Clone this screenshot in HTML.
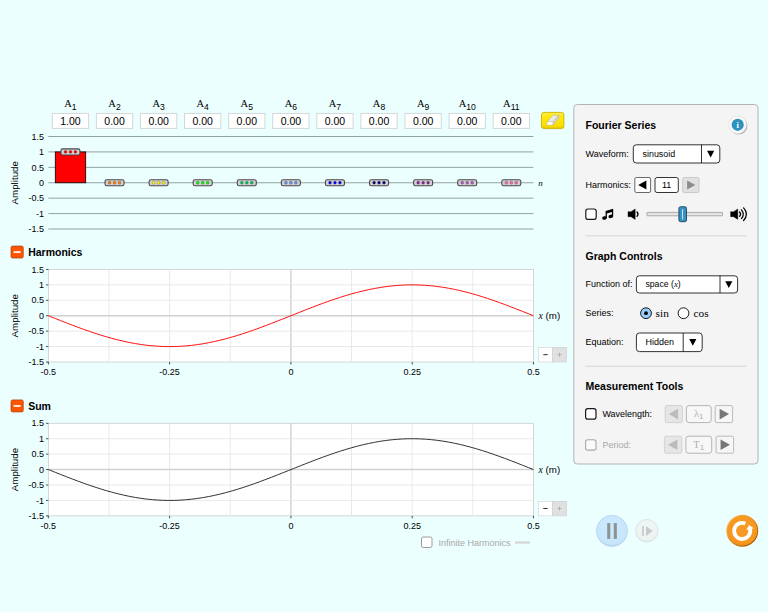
<!DOCTYPE html>
<html lang="en"><head><meta charset="utf-8"><title>Fourier: Making Waves</title>
<style>
html,body{margin:0;padding:0;background:rgb(236,255,255);overflow:hidden}
svg{display:block;position:absolute;left:0;top:0}
text{font-family:"Liberation Sans",Arial,sans-serif}
.s{font-family:"Liberation Serif","Times New Roman",serif}
.t9{font-size:9px}
.tk{font-size:9px}
.b{font-weight:bold;font-size:10.5px}
</style></head><body>
<svg width="768" height="612" viewBox="0 0 768 612">
<defs>
<linearGradient id="shG" x1="0" y1="0" x2="1" y2="1"><stop offset="0.4" stop-color="#e8e8e8"/><stop offset="1" stop-color="#8c8c8c"/></linearGradient>
<linearGradient id="resetS" x1="0.15" y1="0.15" x2="0.85" y2="0.85"><stop offset="0" stop-color="#f9b257"/><stop offset="0.5" stop-color="#e08a1c"/><stop offset="1" stop-color="#a85e08"/></linearGradient>
<linearGradient id="yel" x1="0" y1="0" x2="0" y2="1"><stop offset="0" stop-color="#fff04a"/><stop offset="0.25" stop-color="#ffe812"/><stop offset="0.8" stop-color="#fbe000"/><stop offset="1" stop-color="#e2c800"/></linearGradient>
<linearGradient id="thumb" x1="0" y1="0" x2="0" y2="1"><stop offset="0" stop-color="#7fc4ea"/><stop offset="0.5" stop-color="#3d9bd1"/><stop offset="1" stop-color="#2f7fb0"/></linearGradient>
<radialGradient id="pauseG" cx="0.5" cy="0.4" r="0.6"><stop offset="0" stop-color="#cdeaff"/><stop offset="0.85" stop-color="#c6e6fd"/><stop offset="1" stop-color="#b4d6ef"/></radialGradient>
<radialGradient id="stepG" cx="0.5" cy="0.4" r="0.6"><stop offset="0" stop-color="#f2f7f7"/><stop offset="0.85" stop-color="#ecf2f2"/><stop offset="1" stop-color="#dde5e5"/></radialGradient>
<radialGradient id="resetG" cx="0.5" cy="0.4" r="0.6"><stop offset="0" stop-color="#f89b26"/><stop offset="0.85" stop-color="#f6961e"/><stop offset="1" stop-color="#e48818"/></radialGradient>
<radialGradient id="infoG" cx="0.5" cy="0.4" r="0.6"><stop offset="0" stop-color="#ffffff"/><stop offset="1" stop-color="#e4e4e4"/></radialGradient>
</defs>
<rect width="768" height="612" fill="rgb(236,255,255)"/>

<line x1="48.35" y1="136.50" x2="533.45" y2="136.50" stroke="#93a0a0" stroke-width="1"/>
<text class="tk" x="44.1" y="139.70" text-anchor="end">1.5</text>
<line x1="48.35" y1="151.92" x2="533.45" y2="151.92" stroke="#93a0a0" stroke-width="1"/>
<text class="tk" x="44.1" y="155.12" text-anchor="end">1</text>
<line x1="48.35" y1="167.34" x2="533.45" y2="167.34" stroke="#93a0a0" stroke-width="1"/>
<text class="tk" x="44.1" y="170.54" text-anchor="end">0.5</text>
<line x1="48.35" y1="182.76" x2="533.45" y2="182.76" stroke="#93a0a0" stroke-width="1"/>
<text class="tk" x="44.1" y="185.96" text-anchor="end">0</text>
<line x1="48.35" y1="198.18" x2="533.45" y2="198.18" stroke="#93a0a0" stroke-width="1"/>
<text class="tk" x="44.1" y="201.38" text-anchor="end">-0.5</text>
<line x1="48.35" y1="213.60" x2="533.45" y2="213.60" stroke="#93a0a0" stroke-width="1"/>
<text class="tk" x="44.1" y="216.80" text-anchor="end">-1</text>
<line x1="48.35" y1="229.02" x2="533.45" y2="229.02" stroke="#93a0a0" stroke-width="1"/>
<text class="tk" x="44.1" y="232.22" text-anchor="end">-1.5</text>
<text x="0" y="0" font-size="9.75" text-anchor="middle" transform="translate(18.4,182.76) rotate(-90)">Amplitude</text>
<text class="s" x="538.3" y="186.16" font-size="9" font-style="italic">n</text>
<text class="s" x="70.45" y="107.3" font-size="10.5" text-anchor="middle">A<tspan font-family="Liberation Sans" font-size="8.6" dy="2.7">1</tspan></text>
<rect x="52.30" y="113.4" width="36.3" height="15" fill="#fff" stroke="#d2d8d8" stroke-width="1"/>
<text x="70.45" y="124.5" font-size="10.5" text-anchor="middle">1.00</text>
<rect x="55.3" y="151.92" width="30.4" height="30.84" fill="rgb(255,0,0)" stroke="#000" stroke-width="0.8"/>
<rect x="60.95" y="148.87" width="19" height="6.1" rx="1.8" fill="#d2d2d2" stroke="#484848" stroke-width="1.1"/>
<circle cx="65.50" cy="151.92" r="1.45" fill="rgb(255,0,0)" stroke="#333" stroke-width="0.3"/>
<circle cx="70.45" cy="151.92" r="1.45" fill="rgb(255,0,0)" stroke="#333" stroke-width="0.3"/>
<circle cx="75.40" cy="151.92" r="1.45" fill="rgb(255,0,0)" stroke="#333" stroke-width="0.3"/>
<text class="s" x="114.53" y="107.3" font-size="10.5" text-anchor="middle">A<tspan font-family="Liberation Sans" font-size="8.6" dy="2.7">2</tspan></text>
<rect x="96.38" y="113.4" width="36.3" height="15" fill="#fff" stroke="#d2d8d8" stroke-width="1"/>
<text x="114.53" y="124.5" font-size="10.5" text-anchor="middle">0.00</text>
<rect x="105.03" y="179.71" width="19" height="6.1" rx="1.8" fill="#d2d2d2" stroke="#484848" stroke-width="1.1"/>
<circle cx="109.58" cy="182.76" r="1.45" fill="rgb(255,128,0)" stroke="#333" stroke-width="0.3"/>
<circle cx="114.53" cy="182.76" r="1.45" fill="rgb(255,128,0)" stroke="#333" stroke-width="0.3"/>
<circle cx="119.48" cy="182.76" r="1.45" fill="rgb(255,128,0)" stroke="#333" stroke-width="0.3"/>
<text class="s" x="158.62" y="107.3" font-size="10.5" text-anchor="middle">A<tspan font-family="Liberation Sans" font-size="8.6" dy="2.7">3</tspan></text>
<rect x="140.47" y="113.4" width="36.3" height="15" fill="#fff" stroke="#d2d8d8" stroke-width="1"/>
<text x="158.62" y="124.5" font-size="10.5" text-anchor="middle">0.00</text>
<rect x="149.12" y="179.71" width="19" height="6.1" rx="1.8" fill="#d2d2d2" stroke="#484848" stroke-width="1.1"/>
<circle cx="153.67" cy="182.76" r="1.45" fill="rgb(255,255,0)" stroke="#333" stroke-width="0.3"/>
<circle cx="158.62" cy="182.76" r="1.45" fill="rgb(255,255,0)" stroke="#333" stroke-width="0.3"/>
<circle cx="163.57" cy="182.76" r="1.45" fill="rgb(255,255,0)" stroke="#333" stroke-width="0.3"/>
<text class="s" x="202.70" y="107.3" font-size="10.5" text-anchor="middle">A<tspan font-family="Liberation Sans" font-size="8.6" dy="2.7">4</tspan></text>
<rect x="184.55" y="113.4" width="36.3" height="15" fill="#fff" stroke="#d2d8d8" stroke-width="1"/>
<text x="202.70" y="124.5" font-size="10.5" text-anchor="middle">0.00</text>
<rect x="193.20" y="179.71" width="19" height="6.1" rx="1.8" fill="#d2d2d2" stroke="#484848" stroke-width="1.1"/>
<circle cx="197.75" cy="182.76" r="1.45" fill="rgb(0,255,0)" stroke="#333" stroke-width="0.3"/>
<circle cx="202.70" cy="182.76" r="1.45" fill="rgb(0,255,0)" stroke="#333" stroke-width="0.3"/>
<circle cx="207.65" cy="182.76" r="1.45" fill="rgb(0,255,0)" stroke="#333" stroke-width="0.3"/>
<text class="s" x="246.79" y="107.3" font-size="10.5" text-anchor="middle">A<tspan font-family="Liberation Sans" font-size="8.6" dy="2.7">5</tspan></text>
<rect x="228.64" y="113.4" width="36.3" height="15" fill="#fff" stroke="#d2d8d8" stroke-width="1"/>
<text x="246.79" y="124.5" font-size="10.5" text-anchor="middle">0.00</text>
<rect x="237.29" y="179.71" width="19" height="6.1" rx="1.8" fill="#d2d2d2" stroke="#484848" stroke-width="1.1"/>
<circle cx="241.84" cy="182.76" r="1.45" fill="rgb(0,201,87)" stroke="#333" stroke-width="0.3"/>
<circle cx="246.79" cy="182.76" r="1.45" fill="rgb(0,201,87)" stroke="#333" stroke-width="0.3"/>
<circle cx="251.74" cy="182.76" r="1.45" fill="rgb(0,201,87)" stroke="#333" stroke-width="0.3"/>
<text class="s" x="290.88" y="107.3" font-size="10.5" text-anchor="middle">A<tspan font-family="Liberation Sans" font-size="8.6" dy="2.7">6</tspan></text>
<rect x="272.73" y="113.4" width="36.3" height="15" fill="#fff" stroke="#d2d8d8" stroke-width="1"/>
<text x="290.88" y="124.5" font-size="10.5" text-anchor="middle">0.00</text>
<rect x="281.38" y="179.71" width="19" height="6.1" rx="1.8" fill="#d2d2d2" stroke="#484848" stroke-width="1.1"/>
<circle cx="285.93" cy="182.76" r="1.45" fill="rgb(100,149,237)" stroke="#333" stroke-width="0.3"/>
<circle cx="290.88" cy="182.76" r="1.45" fill="rgb(100,149,237)" stroke="#333" stroke-width="0.3"/>
<circle cx="295.82" cy="182.76" r="1.45" fill="rgb(100,149,237)" stroke="#333" stroke-width="0.3"/>
<text class="s" x="334.96" y="107.3" font-size="10.5" text-anchor="middle">A<tspan font-family="Liberation Sans" font-size="8.6" dy="2.7">7</tspan></text>
<rect x="316.81" y="113.4" width="36.3" height="15" fill="#fff" stroke="#d2d8d8" stroke-width="1"/>
<text x="334.96" y="124.5" font-size="10.5" text-anchor="middle">0.00</text>
<rect x="325.46" y="179.71" width="19" height="6.1" rx="1.8" fill="#d2d2d2" stroke="#484848" stroke-width="1.1"/>
<circle cx="330.01" cy="182.76" r="1.45" fill="rgb(0,0,255)" stroke="#333" stroke-width="0.3"/>
<circle cx="334.96" cy="182.76" r="1.45" fill="rgb(0,0,255)" stroke="#333" stroke-width="0.3"/>
<circle cx="339.91" cy="182.76" r="1.45" fill="rgb(0,0,255)" stroke="#333" stroke-width="0.3"/>
<text class="s" x="379.05" y="107.3" font-size="10.5" text-anchor="middle">A<tspan font-family="Liberation Sans" font-size="8.6" dy="2.7">8</tspan></text>
<rect x="360.90" y="113.4" width="36.3" height="15" fill="#fff" stroke="#d2d8d8" stroke-width="1"/>
<text x="379.05" y="124.5" font-size="10.5" text-anchor="middle">0.00</text>
<rect x="369.55" y="179.71" width="19" height="6.1" rx="1.8" fill="#d2d2d2" stroke="#484848" stroke-width="1.1"/>
<circle cx="374.10" cy="182.76" r="1.45" fill="rgb(0,0,128)" stroke="#333" stroke-width="0.3"/>
<circle cx="379.05" cy="182.76" r="1.45" fill="rgb(0,0,128)" stroke="#333" stroke-width="0.3"/>
<circle cx="384.00" cy="182.76" r="1.45" fill="rgb(0,0,128)" stroke="#333" stroke-width="0.3"/>
<text class="s" x="423.13" y="107.3" font-size="10.5" text-anchor="middle">A<tspan font-family="Liberation Sans" font-size="8.6" dy="2.7">9</tspan></text>
<rect x="404.98" y="113.4" width="36.3" height="15" fill="#fff" stroke="#d2d8d8" stroke-width="1"/>
<text x="423.13" y="124.5" font-size="10.5" text-anchor="middle">0.00</text>
<rect x="413.63" y="179.71" width="19" height="6.1" rx="1.8" fill="#d2d2d2" stroke="#484848" stroke-width="1.1"/>
<circle cx="418.18" cy="182.76" r="1.45" fill="rgb(145,33,158)" stroke="#333" stroke-width="0.3"/>
<circle cx="423.13" cy="182.76" r="1.45" fill="rgb(145,33,158)" stroke="#333" stroke-width="0.3"/>
<circle cx="428.08" cy="182.76" r="1.45" fill="rgb(145,33,158)" stroke="#333" stroke-width="0.3"/>
<text class="s" x="467.21" y="107.3" font-size="10.5" text-anchor="middle">A<tspan font-family="Liberation Sans" font-size="8.6" dy="2.7">10</tspan></text>
<rect x="449.06" y="113.4" width="36.3" height="15" fill="#fff" stroke="#d2d8d8" stroke-width="1"/>
<text x="467.21" y="124.5" font-size="10.5" text-anchor="middle">0.00</text>
<rect x="457.71" y="179.71" width="19" height="6.1" rx="1.8" fill="#d2d2d2" stroke="#484848" stroke-width="1.1"/>
<circle cx="462.26" cy="182.76" r="1.45" fill="rgb(186,85,211)" stroke="#333" stroke-width="0.3"/>
<circle cx="467.21" cy="182.76" r="1.45" fill="rgb(186,85,211)" stroke="#333" stroke-width="0.3"/>
<circle cx="472.16" cy="182.76" r="1.45" fill="rgb(186,85,211)" stroke="#333" stroke-width="0.3"/>
<text class="s" x="511.30" y="107.3" font-size="10.5" text-anchor="middle">A<tspan font-family="Liberation Sans" font-size="8.6" dy="2.7">11</tspan></text>
<rect x="493.15" y="113.4" width="36.3" height="15" fill="#fff" stroke="#d2d8d8" stroke-width="1"/>
<text x="511.30" y="124.5" font-size="10.5" text-anchor="middle">0.00</text>
<rect x="501.80" y="179.71" width="19" height="6.1" rx="1.8" fill="#d2d2d2" stroke="#484848" stroke-width="1.1"/>
<circle cx="506.35" cy="182.76" r="1.45" fill="rgb(255,105,180)" stroke="#333" stroke-width="0.3"/>
<circle cx="511.30" cy="182.76" r="1.45" fill="rgb(255,105,180)" stroke="#333" stroke-width="0.3"/>
<circle cx="516.25" cy="182.76" r="1.45" fill="rgb(255,105,180)" stroke="#333" stroke-width="0.3"/>
<rect x="541.5" y="112.4" width="22.4" height="16.2" rx="2.4" fill="url(#yel)" stroke="#c9b100" stroke-width="0.9"/>
<g stroke="#9a9a9a" stroke-width="0.35" stroke-linejoin="round"><path d="M552.8 115.4 L558.9 115.3 L553.4 121.6 L547.3 121.8 Z" fill="#ececec"/><path d="M547.3 121.8 L553.4 121.6 L553 125 L546.7 125.2 Z" fill="#fff"/><path d="M553.4 121.6 L558.9 115.3 L558.7 118.3 L553 125 Z" fill="#d8d8d8"/></g>
<rect x="11" y="246.05" width="12.25" height="12" rx="1.5" fill="rgb(255,85,0)" stroke="#a8400a" stroke-width="0.7"/>
<rect x="13.6" y="251.25" width="7" height="1.7" fill="#fff"/>
<text class="b" x="28.2" y="256.05">Harmonics</text>
<rect x="48.35" y="269.45" width="485.1" height="92.55" fill="#fff" stroke="#c8cccc" stroke-width="0.8"/>
<line x1="108.99" y1="269.45" x2="108.99" y2="362.00" stroke="#e5e5e5" stroke-width="0.85"/>
<line x1="169.62" y1="269.45" x2="169.62" y2="362.00" stroke="#e5e5e5" stroke-width="0.85"/>
<line x1="230.26" y1="269.45" x2="230.26" y2="362.00" stroke="#e5e5e5" stroke-width="0.85"/>
<line x1="290.90" y1="269.45" x2="290.90" y2="362.00" stroke="#d0d0d0" stroke-width="1.4"/>
<line x1="351.54" y1="269.45" x2="351.54" y2="362.00" stroke="#e5e5e5" stroke-width="0.85"/>
<line x1="412.18" y1="269.45" x2="412.18" y2="362.00" stroke="#e5e5e5" stroke-width="0.85"/>
<line x1="472.81" y1="269.45" x2="472.81" y2="362.00" stroke="#e5e5e5" stroke-width="0.85"/>
<line x1="46.050000000000004" y1="269.45" x2="48.35" y2="269.45" stroke="#000" stroke-width="0.7"/>
<text class="tk" x="44.1" y="272.55" text-anchor="end">1.5</text>
<line x1="48.35" y1="284.88" x2="533.45" y2="284.88" stroke="#e5e5e5" stroke-width="0.85"/>
<line x1="46.050000000000004" y1="284.88" x2="48.35" y2="284.88" stroke="#000" stroke-width="0.7"/>
<text class="tk" x="44.1" y="287.98" text-anchor="end">1</text>
<line x1="48.35" y1="300.30" x2="533.45" y2="300.30" stroke="#e5e5e5" stroke-width="0.85"/>
<line x1="46.050000000000004" y1="300.30" x2="48.35" y2="300.30" stroke="#000" stroke-width="0.7"/>
<text class="tk" x="44.1" y="303.40" text-anchor="end">0.5</text>
<line x1="48.35" y1="315.72" x2="533.45" y2="315.72" stroke="#d0d0d0" stroke-width="1.4"/>
<line x1="46.050000000000004" y1="315.72" x2="48.35" y2="315.72" stroke="#000" stroke-width="0.7"/>
<text class="tk" x="44.1" y="318.82" text-anchor="end">0</text>
<line x1="48.35" y1="331.15" x2="533.45" y2="331.15" stroke="#e5e5e5" stroke-width="0.85"/>
<line x1="46.050000000000004" y1="331.15" x2="48.35" y2="331.15" stroke="#000" stroke-width="0.7"/>
<text class="tk" x="44.1" y="334.25" text-anchor="end">-0.5</text>
<line x1="48.35" y1="346.57" x2="533.45" y2="346.57" stroke="#e5e5e5" stroke-width="0.85"/>
<line x1="46.050000000000004" y1="346.57" x2="48.35" y2="346.57" stroke="#000" stroke-width="0.7"/>
<text class="tk" x="44.1" y="349.68" text-anchor="end">-1</text>
<line x1="46.050000000000004" y1="362.00" x2="48.35" y2="362.00" stroke="#000" stroke-width="0.7"/>
<text class="tk" x="44.1" y="365.10" text-anchor="end">-1.5</text>
<line x1="48.35" y1="362.00" x2="48.35" y2="364.50" stroke="#000" stroke-width="0.7"/>
<text class="tk" x="48.35" y="374.70" text-anchor="middle">-0.5</text>
<line x1="169.62" y1="362.00" x2="169.62" y2="364.50" stroke="#000" stroke-width="0.7"/>
<text class="tk" x="169.62" y="374.70" text-anchor="middle">-0.25</text>
<line x1="290.90" y1="362.00" x2="290.90" y2="364.50" stroke="#000" stroke-width="0.7"/>
<text class="tk" x="290.90" y="374.70" text-anchor="middle">0</text>
<line x1="412.18" y1="362.00" x2="412.18" y2="364.50" stroke="#000" stroke-width="0.7"/>
<text class="tk" x="412.18" y="374.70" text-anchor="middle">0.25</text>
<line x1="533.45" y1="362.00" x2="533.45" y2="364.50" stroke="#000" stroke-width="0.7"/>
<text class="tk" x="533.45" y="374.70" text-anchor="middle">0.5</text>
<text x="0" y="0" font-size="9.75" text-anchor="middle" transform="translate(18.4,315.72) rotate(-90)">Amplitude</text>
<text x="538.5" y="319.12" font-size="9.75"><tspan class="s" font-style="italic">x</tspan> (m)</text>
<polyline points="48.35,315.72 50.78,316.69 53.20,317.66 55.63,318.63 58.05,319.59 60.48,320.55 62.90,321.51 65.33,322.45 67.75,323.40 70.18,324.33 72.61,325.26 75.03,326.18 77.46,327.08 79.88,327.98 82.31,328.86 84.73,329.73 87.16,330.59 89.58,331.43 92.01,332.26 94.43,333.07 96.86,333.86 99.29,334.63 101.71,335.39 104.14,336.13 106.56,336.84 108.99,337.54 111.41,338.21 113.84,338.87 116.26,339.50 118.69,340.10 121.12,340.68 123.54,341.24 125.97,341.77 128.39,342.28 130.82,342.76 133.24,343.21 135.67,343.64 138.09,344.04 140.52,344.41 142.94,344.75 145.37,345.07 147.80,345.35 150.22,345.61 152.65,345.83 155.07,346.03 157.50,346.20 159.92,346.33 162.35,346.44 164.77,346.51 167.20,346.56 169.62,346.57 172.05,346.56 174.48,346.51 176.90,346.44 179.33,346.33 181.75,346.20 184.18,346.03 186.60,345.83 189.03,345.61 191.45,345.35 193.88,345.07 196.31,344.75 198.73,344.41 201.16,344.04 203.58,343.64 206.01,343.21 208.43,342.76 210.86,342.28 213.28,341.77 215.71,341.24 218.13,340.68 220.56,340.10 222.99,339.50 225.41,338.87 227.84,338.21 230.26,337.54 232.69,336.84 235.11,336.13 237.54,335.39 239.96,334.63 242.39,333.86 244.82,333.07 247.24,332.26 249.67,331.43 252.09,330.59 254.52,329.73 256.94,328.86 259.37,327.98 261.79,327.08 264.22,326.18 266.65,325.26 269.07,324.33 271.50,323.40 273.92,322.45 276.35,321.51 278.77,320.55 281.20,319.59 283.62,318.63 286.05,317.66 288.47,316.69 290.90,315.72 293.33,314.76 295.75,313.79 298.18,312.82 300.60,311.86 303.03,310.90 305.45,309.94 307.88,309.00 310.30,308.05 312.73,307.12 315.16,306.19 317.58,305.27 320.01,304.37 322.43,303.47 324.86,302.59 327.28,301.72 329.71,300.86 332.13,300.02 334.56,299.19 336.98,298.38 339.41,297.59 341.84,296.82 344.26,296.06 346.69,295.32 349.11,294.61 351.54,293.91 353.96,293.24 356.39,292.58 358.81,291.95 361.24,291.35 363.67,290.77 366.09,290.21 368.52,289.68 370.94,289.17 373.37,288.69 375.79,288.24 378.22,287.81 380.64,287.41 383.07,287.04 385.49,286.70 387.92,286.38 390.35,286.10 392.77,285.84 395.20,285.62 397.62,285.42 400.05,285.25 402.47,285.12 404.90,285.01 407.32,284.94 409.75,284.89 412.18,284.87 414.60,284.89 417.03,284.94 419.45,285.01 421.88,285.12 424.30,285.25 426.73,285.42 429.15,285.62 431.58,285.84 434.00,286.10 436.43,286.38 438.86,286.70 441.28,287.04 443.71,287.41 446.13,287.81 448.56,288.24 450.98,288.69 453.41,289.17 455.83,289.68 458.26,290.21 460.69,290.77 463.11,291.35 465.54,291.95 467.96,292.58 470.39,293.24 472.81,293.91 475.24,294.61 477.66,295.32 480.09,296.06 482.51,296.82 484.94,297.59 487.37,298.38 489.79,299.19 492.22,300.02 494.64,300.86 497.07,301.72 499.49,302.59 501.92,303.47 504.34,304.37 506.77,305.27 509.20,306.19 511.62,307.12 514.05,308.05 516.47,309.00 518.90,309.94 521.32,310.90 523.75,311.86 526.17,312.82 528.60,313.79 531.02,314.76 533.45,315.72" fill="none" stroke="rgb(255,0,0)" stroke-width="0.95"/>
<rect x="538.5" y="347.50" width="14" height="14.5" fill="#fff" stroke="#d8d8d8" stroke-width="0.7"/>
<rect x="552.5" y="347.50" width="14" height="14.5" fill="#e0e0e0" stroke="#d0d0d0" stroke-width="0.7"/>
<rect x="543.3" y="354.25" width="4.3" height="0.9" fill="#111"/>
<rect x="557.4" y="354.30" width="4.2" height="0.8" fill="#aaa"/><rect x="559.1" y="352.60" width="0.8" height="4.2" fill="#aaa"/>
<rect x="11" y="399.90" width="12.25" height="12" rx="1.5" fill="rgb(255,85,0)" stroke="#a8400a" stroke-width="0.7"/>
<rect x="13.6" y="405.10" width="7" height="1.7" fill="#fff"/>
<text class="b" x="28.2" y="409.90">Sum</text>
<rect x="48.35" y="423.30" width="485.1" height="92.55" fill="#fff" stroke="#c8cccc" stroke-width="0.8"/>
<line x1="108.99" y1="423.30" x2="108.99" y2="515.85" stroke="#e5e5e5" stroke-width="0.85"/>
<line x1="169.62" y1="423.30" x2="169.62" y2="515.85" stroke="#e5e5e5" stroke-width="0.85"/>
<line x1="230.26" y1="423.30" x2="230.26" y2="515.85" stroke="#e5e5e5" stroke-width="0.85"/>
<line x1="290.90" y1="423.30" x2="290.90" y2="515.85" stroke="#d0d0d0" stroke-width="1.4"/>
<line x1="351.54" y1="423.30" x2="351.54" y2="515.85" stroke="#e5e5e5" stroke-width="0.85"/>
<line x1="412.18" y1="423.30" x2="412.18" y2="515.85" stroke="#e5e5e5" stroke-width="0.85"/>
<line x1="472.81" y1="423.30" x2="472.81" y2="515.85" stroke="#e5e5e5" stroke-width="0.85"/>
<line x1="46.050000000000004" y1="423.30" x2="48.35" y2="423.30" stroke="#000" stroke-width="0.7"/>
<text class="tk" x="44.1" y="426.40" text-anchor="end">1.5</text>
<line x1="48.35" y1="438.73" x2="533.45" y2="438.73" stroke="#e5e5e5" stroke-width="0.85"/>
<line x1="46.050000000000004" y1="438.73" x2="48.35" y2="438.73" stroke="#000" stroke-width="0.7"/>
<text class="tk" x="44.1" y="441.83" text-anchor="end">1</text>
<line x1="48.35" y1="454.15" x2="533.45" y2="454.15" stroke="#e5e5e5" stroke-width="0.85"/>
<line x1="46.050000000000004" y1="454.15" x2="48.35" y2="454.15" stroke="#000" stroke-width="0.7"/>
<text class="tk" x="44.1" y="457.25" text-anchor="end">0.5</text>
<line x1="48.35" y1="469.57" x2="533.45" y2="469.57" stroke="#d0d0d0" stroke-width="1.4"/>
<line x1="46.050000000000004" y1="469.57" x2="48.35" y2="469.57" stroke="#000" stroke-width="0.7"/>
<text class="tk" x="44.1" y="472.68" text-anchor="end">0</text>
<line x1="48.35" y1="485.00" x2="533.45" y2="485.00" stroke="#e5e5e5" stroke-width="0.85"/>
<line x1="46.050000000000004" y1="485.00" x2="48.35" y2="485.00" stroke="#000" stroke-width="0.7"/>
<text class="tk" x="44.1" y="488.10" text-anchor="end">-0.5</text>
<line x1="48.35" y1="500.43" x2="533.45" y2="500.43" stroke="#e5e5e5" stroke-width="0.85"/>
<line x1="46.050000000000004" y1="500.43" x2="48.35" y2="500.43" stroke="#000" stroke-width="0.7"/>
<text class="tk" x="44.1" y="503.53" text-anchor="end">-1</text>
<line x1="46.050000000000004" y1="515.85" x2="48.35" y2="515.85" stroke="#000" stroke-width="0.7"/>
<text class="tk" x="44.1" y="518.95" text-anchor="end">-1.5</text>
<line x1="48.35" y1="515.85" x2="48.35" y2="518.35" stroke="#000" stroke-width="0.7"/>
<text class="tk" x="48.35" y="528.55" text-anchor="middle">-0.5</text>
<line x1="169.62" y1="515.85" x2="169.62" y2="518.35" stroke="#000" stroke-width="0.7"/>
<text class="tk" x="169.62" y="528.55" text-anchor="middle">-0.25</text>
<line x1="290.90" y1="515.85" x2="290.90" y2="518.35" stroke="#000" stroke-width="0.7"/>
<text class="tk" x="290.90" y="528.55" text-anchor="middle">0</text>
<line x1="412.18" y1="515.85" x2="412.18" y2="518.35" stroke="#000" stroke-width="0.7"/>
<text class="tk" x="412.18" y="528.55" text-anchor="middle">0.25</text>
<line x1="533.45" y1="515.85" x2="533.45" y2="518.35" stroke="#000" stroke-width="0.7"/>
<text class="tk" x="533.45" y="528.55" text-anchor="middle">0.5</text>
<text x="0" y="0" font-size="9.75" text-anchor="middle" transform="translate(18.4,469.57) rotate(-90)">Amplitude</text>
<text x="538.5" y="472.97" font-size="9.75"><tspan class="s" font-style="italic">x</tspan> (m)</text>
<polyline points="48.35,469.57 50.78,470.54 53.20,471.51 55.63,472.48 58.05,473.44 60.48,474.40 62.90,475.36 65.33,476.30 67.75,477.25 70.18,478.18 72.61,479.11 75.03,480.03 77.46,480.93 79.88,481.83 82.31,482.71 84.73,483.58 87.16,484.44 89.58,485.28 92.01,486.11 94.43,486.92 96.86,487.71 99.29,488.48 101.71,489.24 104.14,489.98 106.56,490.69 108.99,491.39 111.41,492.06 113.84,492.72 116.26,493.35 118.69,493.95 121.12,494.53 123.54,495.09 125.97,495.62 128.39,496.13 130.82,496.61 133.24,497.06 135.67,497.49 138.09,497.89 140.52,498.26 142.94,498.60 145.37,498.92 147.80,499.20 150.22,499.46 152.65,499.68 155.07,499.88 157.50,500.05 159.92,500.18 162.35,500.29 164.77,500.36 167.20,500.41 169.62,500.43 172.05,500.41 174.48,500.36 176.90,500.29 179.33,500.18 181.75,500.05 184.18,499.88 186.60,499.68 189.03,499.46 191.45,499.20 193.88,498.92 196.31,498.60 198.73,498.26 201.16,497.89 203.58,497.49 206.01,497.06 208.43,496.61 210.86,496.13 213.28,495.62 215.71,495.09 218.13,494.53 220.56,493.95 222.99,493.35 225.41,492.72 227.84,492.06 230.26,491.39 232.69,490.69 235.11,489.98 237.54,489.24 239.96,488.48 242.39,487.71 244.82,486.92 247.24,486.11 249.67,485.28 252.09,484.44 254.52,483.58 256.94,482.71 259.37,481.83 261.79,480.93 264.22,480.03 266.65,479.11 269.07,478.18 271.50,477.25 273.92,476.30 276.35,475.36 278.77,474.40 281.20,473.44 283.62,472.48 286.05,471.51 288.47,470.54 290.90,469.57 293.33,468.61 295.75,467.64 298.18,466.67 300.60,465.71 303.03,464.75 305.45,463.79 307.88,462.85 310.30,461.90 312.73,460.97 315.16,460.04 317.58,459.12 320.01,458.22 322.43,457.32 324.86,456.44 327.28,455.57 329.71,454.71 332.13,453.87 334.56,453.04 336.98,452.23 339.41,451.44 341.84,450.67 344.26,449.91 346.69,449.17 349.11,448.46 351.54,447.76 353.96,447.09 356.39,446.43 358.81,445.80 361.24,445.20 363.67,444.62 366.09,444.06 368.52,443.53 370.94,443.02 373.37,442.54 375.79,442.09 378.22,441.66 380.64,441.26 383.07,440.89 385.49,440.55 387.92,440.23 390.35,439.95 392.77,439.69 395.20,439.47 397.62,439.27 400.05,439.10 402.47,438.97 404.90,438.86 407.32,438.79 409.75,438.74 412.18,438.72 414.60,438.74 417.03,438.79 419.45,438.86 421.88,438.97 424.30,439.10 426.73,439.27 429.15,439.47 431.58,439.69 434.00,439.95 436.43,440.23 438.86,440.55 441.28,440.89 443.71,441.26 446.13,441.66 448.56,442.09 450.98,442.54 453.41,443.02 455.83,443.53 458.26,444.06 460.69,444.62 463.11,445.20 465.54,445.80 467.96,446.43 470.39,447.09 472.81,447.76 475.24,448.46 477.66,449.17 480.09,449.91 482.51,450.67 484.94,451.44 487.37,452.23 489.79,453.04 492.22,453.87 494.64,454.71 497.07,455.57 499.49,456.44 501.92,457.32 504.34,458.22 506.77,459.12 509.20,460.04 511.62,460.97 514.05,461.90 516.47,462.85 518.90,463.79 521.32,464.75 523.75,465.71 526.17,466.67 528.60,467.64 531.02,468.61 533.45,469.57" fill="none" stroke="#222" stroke-width="0.95"/>
<rect x="538.5" y="501.35" width="14" height="14.5" fill="#fff" stroke="#d8d8d8" stroke-width="0.7"/>
<rect x="552.5" y="501.35" width="14" height="14.5" fill="#e0e0e0" stroke="#d0d0d0" stroke-width="0.7"/>
<rect x="543.3" y="508.10" width="4.3" height="0.9" fill="#111"/>
<rect x="557.4" y="508.15" width="4.2" height="0.8" fill="#aaa"/><rect x="559.1" y="506.45" width="0.8" height="4.2" fill="#aaa"/>
<rect x="421.5" y="537" width="10.5" height="10.5" rx="1.8" fill="#fff" stroke="#999" stroke-width="1"/>
<text x="438.5" y="545.7" font-size="9" fill="#a8a8a8">Infinite Harmonics</text>
<line x1="515" y1="542.5" x2="530" y2="542.5" stroke="#d4d4d4" stroke-width="2.2"/>
<rect x="573.8" y="104.5" width="184.2" height="359.5" rx="3.5" fill="#f4f4f4" stroke="#b4b4b4" stroke-width="1"/>
<text class="b" x="585.5" y="129">Fourier Series</text>
<circle cx="738.3" cy="125.5" r="9.1" fill="url(#shG)"/>
<circle cx="737.6" cy="124.8" r="8.9" fill="#f9f9f9" stroke="#dcdcdc" stroke-width="0.6"/>
<circle cx="737.7" cy="124.8" r="6.1" fill="#2f91be"/>
<text class="s" x="737.7" y="127.9" font-size="8.6" font-weight="bold" text-anchor="middle" fill="#fff">i</text>
<text class="t9" x="585.5" y="156.8">Waveform:</text>
<rect x="633.3" y="144.8" width="86.5" height="18.2" rx="3" fill="#fff" stroke="#000" stroke-width="0.8"/>
<line x1="701.5" y1="144.8" x2="701.5" y2="163.0" stroke="#000" stroke-width="0.8"/>
<path d="M707.05 150.70 L714.25 150.70 L710.65 157.50 Z" fill="#000"/>
<text x="642.6" y="156.90" font-size="8.9">sinusoid</text>
<text class="t9" x="585.5" y="188.2">Harmonics:</text>
<rect x="634.8" y="177.5" width="15.8" height="15" rx="1.6" fill="#fff" stroke="#444" stroke-width="0.8"/>
<path d="M646.40 180.40 L646.40 189.60 L638.20 185.00 Z" fill="#000"/>
<rect x="655" y="177.5" width="23.3" height="15" rx="2" fill="#fff" stroke="#000" stroke-width="0.8"/>
<text x="666.6" y="188.3" font-size="9" text-anchor="middle">11</text>
<rect x="682.7" y="177.5" width="16.3" height="15" rx="1.6" fill="#e1e1e1" stroke="#c0c0c0" stroke-width="0.8"/>
<path d="M687.15 180.40 L687.15 189.60 L695.35 185.00 Z" fill="#8c8c8c"/>
<rect x="585.8" y="209" width="10.4" height="10.4" rx="2.2" fill="#fff" stroke="#1a1a1a" stroke-width="1.2"/>
<g fill="#000"><ellipse cx="604.5" cy="218" rx="2.35" ry="1.75" transform="rotate(-12 604.5 218)"/><ellipse cx="610.8" cy="216.4" rx="2.35" ry="1.75" transform="rotate(-12 610.8 216.4)"/><path d="M605.6 218 L605.6 210.9 L613.2 208.7 L613.2 216.4 L611.9 216.4 L611.9 212.1 L606.9 213.5 L606.9 218 Z"/></g>
<path d="M628 211.7 L631 211.7 L635.2 209.0 L635.2 219.39999999999998 L631 216.7 L628 216.7 Z" fill="#000" stroke="#000" stroke-width="0.4" stroke-linejoin="round"/>
<path d="M637 212.0 Q639 214.2 637 216.39999999999998" fill="none" stroke="#000" stroke-width="1.25" stroke-linecap="round"/>
<rect x="646.9" y="212.4" width="75.6" height="3.4" rx="0.4" fill="#e4e4e4" stroke="#8f8f8f" stroke-width="0.7"/>
<rect x="678.9" y="206.7" width="7.6" height="15" rx="1.7" fill="#3391c4" stroke="#173f57" stroke-width="0.85"/>
<line x1="682.6" y1="209.2" x2="682.6" y2="219.4" stroke="#fff" stroke-width="0.8"/>
<path d="M730.6 211.7 L733.6 211.7 L737.8000000000001 209.0 L737.8000000000001 219.39999999999998 L733.6 216.7 L730.6 216.7 Z" fill="#000" stroke="#000" stroke-width="0.4" stroke-linejoin="round"/>
<path d="M739.6 212.0 Q741.6 214.2 739.6 216.39999999999998" fill="none" stroke="#000" stroke-width="1.25" stroke-linecap="round"/>
<path d="M741.4 209.79999999999998 Q745.2 214.2 741.4 218.6" fill="none" stroke="#000" stroke-width="1.25" stroke-linecap="round"/>
<path d="M743.6 207.89999999999998 Q749.2 214.2 743.6 220.5" fill="none" stroke="#000" stroke-width="1.25" stroke-linecap="round"/>
<line x1="585.5" y1="235.8" x2="746.5" y2="235.8" stroke="#d2d2d2" stroke-width="0.9"/>
<text class="b" x="585.5" y="260">Graph Controls</text>
<text class="t9" x="585.5" y="287.4">Function of:</text>
<rect x="636.4" y="275.8" width="101.2" height="17.2" rx="3" fill="#fff" stroke="#000" stroke-width="0.8"/>
<line x1="720" y1="275.8" x2="720" y2="293" stroke="#000" stroke-width="0.8"/>
<path d="M725.2 281.2 L732.4 281.2 L728.8 288 Z" fill="#000"/>
<text x="645.4" y="287.4" font-size="8.7">space (<tspan class="s" font-style="italic">x</tspan>)</text>
<text class="t9" x="585.5" y="316">Series:</text>
<circle cx="646" cy="313.2" r="5.4" fill="rgb(153,204,255)" stroke="#000" stroke-width="0.9"/><circle cx="646" cy="313.2" r="1.9" fill="#000"/>
<text class="s" x="655.6" y="316.8" font-size="11.3">sin</text>
<circle cx="683.5" cy="313.2" r="5.4" fill="#fff" stroke="#000" stroke-width="0.9"/>
<text class="s" x="693.6" y="316.8" font-size="11.3">cos</text>
<text class="t9" x="585.5" y="345.4">Equation:</text>
<rect x="636.4" y="333" width="65.8" height="18.6" rx="3" fill="#fff" stroke="#000" stroke-width="0.8"/>
<line x1="683.2" y1="333" x2="683.2" y2="351.6" stroke="#000" stroke-width="0.8"/>
<path d="M689.2 339 L696.4 339 L692.8 345.8 Z" fill="#000"/>
<text x="645.6" y="345.4" font-size="9">Hidden</text>
<line x1="585.5" y1="366.2" x2="746.5" y2="366.2" stroke="#d2d2d2" stroke-width="0.9"/>
<text class="b" x="585.5" y="390">Measurement Tools</text>
<rect x="585.6" y="408.7" width="10.4" height="10.4" rx="2.2" fill="#fff" stroke="#1a1a1a" stroke-width="1.2"/>
<text class="t9" x="602.4" y="417.2">Wavelength:</text>
<rect x="665.2" y="405.6" width="17.199999999999932" height="17.0" rx="1.6" fill="#e6e6e6" stroke="#cacaca" stroke-width="0.8"/>
<path d="M678.10 408.80 L678.10 419.40 L668.70 414.10 Z" fill="#bcbcbc"/>
<rect x="686.4" y="405.6" width="24.80" height="17.0" rx="2.6" fill="#f7f7f7" stroke="#a4a4a4" stroke-width="0.8"/>
<text x="698.80" y="417.0" font-size="10.5" text-anchor="middle" fill="#b0b0b0" class="s">λ<tspan font-family="Liberation Sans" font-size="8" dy="2.2">1</tspan></text>
<rect x="715.2" y="405.6" width="17.399999999999977" height="17.0" rx="1.6" fill="#f6f6f6" stroke="#ababab" stroke-width="0.8"/>
<path d="M719.60 408.80 L719.60 419.40 L729.00 414.10 Z" fill="#767676"/>
<rect x="585.6" y="439.7" width="10.4" height="10.4" rx="2.2" fill="#fafafa" stroke="#a8a8a8" stroke-width="1.1"/>
<text class="t9" x="602.4" y="447.9" fill="#a8a8a8">Period:</text>
<rect x="664.4" y="436.2" width="17.399999999999977" height="17.0" rx="1.6" fill="#e6e6e6" stroke="#cacaca" stroke-width="0.8"/>
<path d="M677.40 439.40 L677.40 450.00 L668.00 444.70 Z" fill="#bcbcbc"/>
<rect x="685.9" y="436.2" width="25.80" height="17.0" rx="2.6" fill="#f7f7f7" stroke="#a4a4a4" stroke-width="0.8"/>
<text x="698.80" y="447.59999999999997" font-size="10.5" text-anchor="middle" fill="#b0b0b0" class="s">T<tspan font-family="Liberation Sans" font-size="8" dy="2.2">1</tspan></text>
<rect x="716.1" y="436.2" width="17.5" height="17.0" rx="1.6" fill="#f6f6f6" stroke="#ababab" stroke-width="0.8"/>
<path d="M720.55 439.40 L720.55 450.00 L729.95 444.70 Z" fill="#767676"/>
<circle cx="612" cy="530.9" r="15.6" fill="url(#pauseG)" stroke="#b9d3e8" stroke-width="0.7"/>
<rect x="607.2" y="523.1" width="3.1" height="15.8" fill="#8e9494"/><rect x="613.75" y="523.1" width="3.1" height="15.8" fill="#8e9494"/>
<circle cx="646.8" cy="530.7" r="11.3" fill="url(#stepG)" stroke="#d6dcdc" stroke-width="0.7"/>
<rect x="642.1" y="525.9" width="1.75" height="10" fill="#c6cccc"/><path d="M646 525.9 L646 535.9 L652.8 530.9 Z" fill="#c6cccc"/>
<circle cx="742.3" cy="530.8" r="15.4" fill="url(#resetG)" stroke="url(#resetS)" stroke-width="1.1"/>
<path d="M746.11 521.70 A10 10 0 1 0 751.94 528.65 L753.7 528.25 L749 525.1 L746.29 529.96 L748.24 529.51 A6.2 6.2 0 1 1 744.62 525.19 Z" fill="#fff"/>
</svg></body></html>
